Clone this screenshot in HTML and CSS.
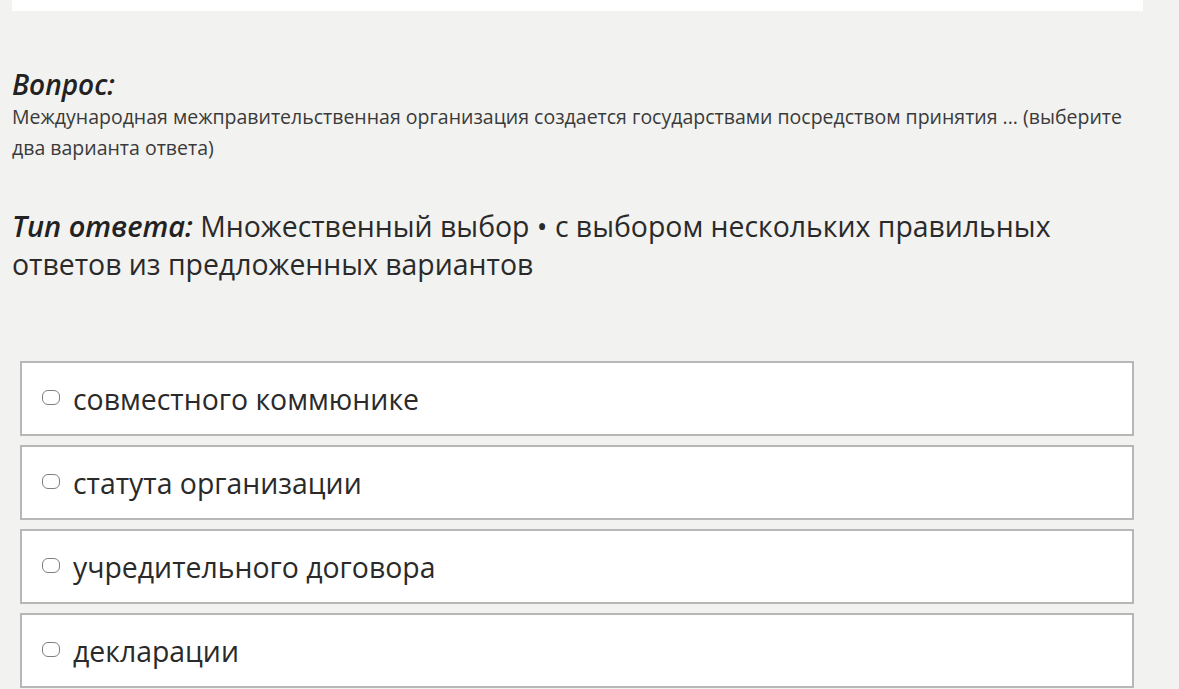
FILE: index.html
```html
<!DOCTYPE html>
<html lang="ru">
<head>
<meta charset="utf-8">
<link rel="stylesheet" href="styles.css">
</head>
<body>
<div class="page">
  <div class="topbar"></div>
  <section class="question">
    <h2 class="label">Вопрос:</h2>
    <p class="qtext">Международная межправительственная организация создается государствами посредством принятия ... (выберите два варианта ответа)</p>
  </section>
  <section class="type">
    <p><b class="type-label">Тип ответа:</b> Множественный выбор • с выбором нескольких правильных ответов из предложенных вариантов</p>
  </section>
  <ul class="options">
    <li class="option"><span class="box"></span><span class="opt-text">совместного коммюнике</span></li>
    <li class="option"><span class="box"></span><span class="opt-text">статута организации</span></li>
    <li class="option"><span class="box"></span><span class="opt-text">учредительного договора</span></li>
    <li class="option"><span class="box"></span><span class="opt-text">декларации</span></li>
  </ul>
</div>
</body>
</html>
```
FILE: styles.css
```css
html, body {
  margin: 0;
  padding: 0;
  background: #f2f2f0;
  height: 100%;
  overflow: hidden;
}
body {
  font-family: "Open Sans", "Noto Sans", sans-serif;
  color: #2a2a2a;
}
.page {
  padding: 0 36px 0 12px;
}
.topbar {
  height: 11px;
  background: #ffffff;
}
.question {
  margin-top: 56px;
}
.label {
  margin: 0;
  font-size: 28px;
  line-height: 34px;
  font-weight: 600;
  font-style: italic;
  color: #222;
}
.qtext {
  margin: 0;
  font-size: 19.5px;
  line-height: 31px;
  color: #3a3a3a;
}
.type {
  margin-top: 44px;
}
.type p {
  margin: 0;
  font-size: 28.4px;
  line-height: 38px;
  color: #2a2a2a;
}
.type-label {
  font-style: italic;
  font-weight: 600;
  font-size: 29px;
  color: #222;
}
.options {
  list-style: none;
  margin: 78px 9px 0 8px;
  padding: 0;
  display: flex;
  flex-direction: column;
  gap: 9px;
}
.option {
  height: 71px;
  background: #fff;
  border: 2px solid #b7b7b7;
  display: flex;
  align-items: center;
  padding-left: 20px;
}
.box {
  width: 16px;
  height: 13px;
  border: 1.5px solid #808080;
  border-radius: 6px;
  margin-right: 13px;
  margin-top: -3px;
  flex: none;
}
.opt-text {
  font-size: 28.4px;
  color: #2a2a2a;
}
```
